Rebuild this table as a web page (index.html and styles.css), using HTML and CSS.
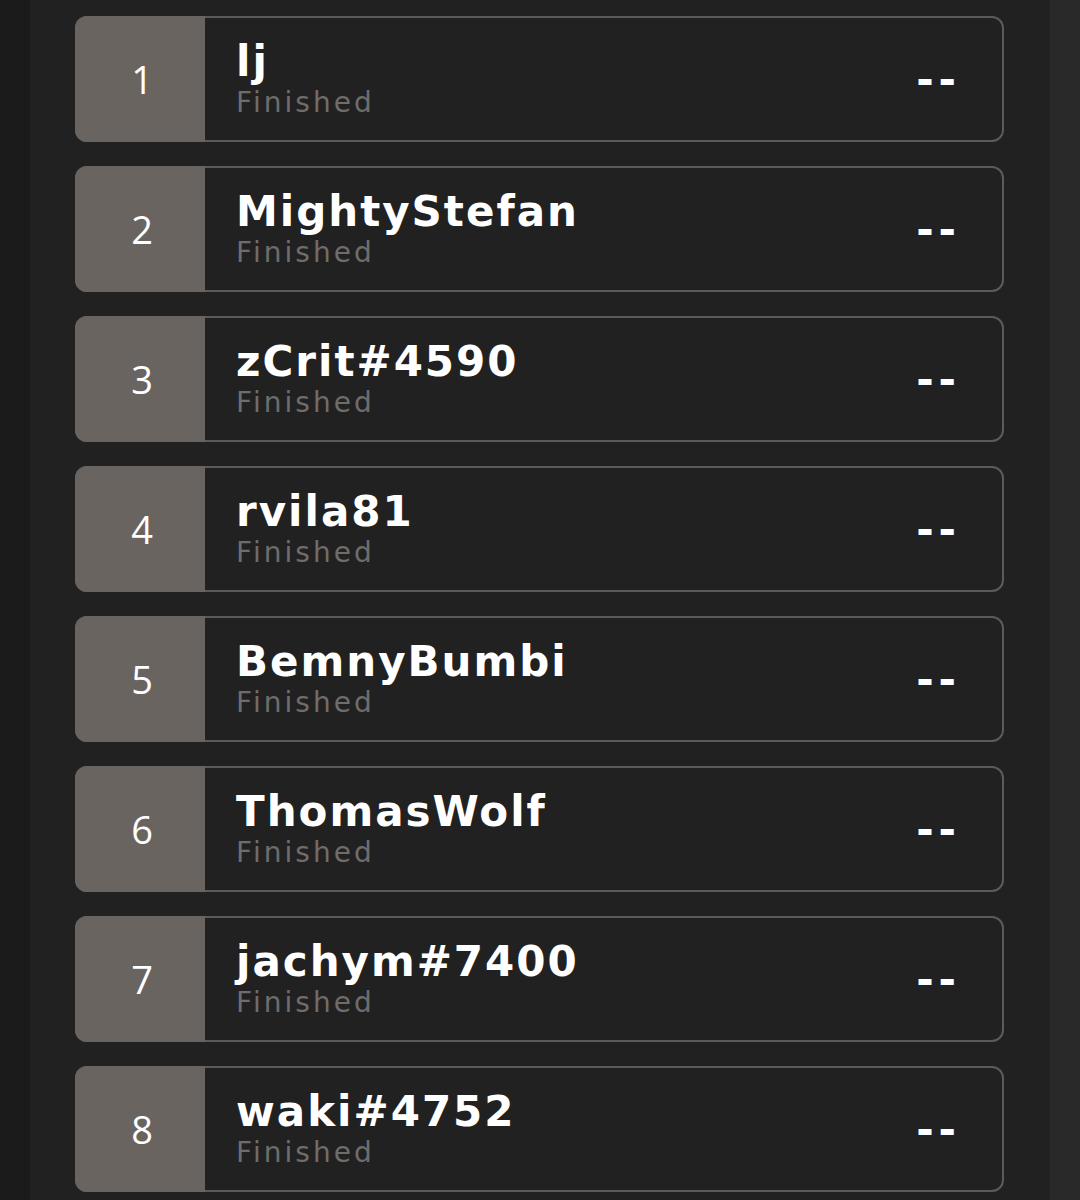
FILE: index.html
```html
<!DOCTYPE html>
<html>
<head>
<meta charset="utf-8">
<link rel="stylesheet" href="styles.css">
</head>
<body>
<div class="page">
  <div class="edge-left"></div>
  <main class="list">
    <div class="card"><div class="rank">1</div><div class="info"><div class="name">lj</div><div class="status">Finished</div></div><div class="score">--</div></div>
    <div class="card"><div class="rank">2</div><div class="info"><div class="name">MightyStefan</div><div class="status">Finished</div></div><div class="score">--</div></div>
    <div class="card"><div class="rank">3</div><div class="info"><div class="name">zCrit#4590</div><div class="status">Finished</div></div><div class="score">--</div></div>
    <div class="card"><div class="rank">4</div><div class="info"><div class="name">rvila81</div><div class="status">Finished</div></div><div class="score">--</div></div>
    <div class="card"><div class="rank">5</div><div class="info"><div class="name">BemnyBumbi</div><div class="status">Finished</div></div><div class="score">--</div></div>
    <div class="card"><div class="rank">6</div><div class="info"><div class="name">ThomasWolf</div><div class="status">Finished</div></div><div class="score">--</div></div>
    <div class="card"><div class="rank">7</div><div class="info"><div class="name">jachym#7400</div><div class="status">Finished</div></div><div class="score">--</div></div>
    <div class="card"><div class="rank">8</div><div class="info"><div class="name">waki#4752</div><div class="status">Finished</div></div><div class="score">--</div></div>
  </main>
  <div class="edge-right"></div>
</div>
</body>
</html>
```
FILE: styles.css
```css
html, body {
  margin: 0;
  padding: 0;
  background: #222121;
  height: 1200px;
  overflow: hidden;
}
.page {
  display: flex;
  height: 1200px;
  font-family: "DejaVu Sans", "Open Sans", sans-serif;
}
.edge-left {
  width: 30px;
  background: #1c1b1b;
}
.edge-right {
  width: 30px;
  background: #292929;
}
.list {
  flex: 1;
  background: #222121;
  padding: 16px 46px 0 45px;
  display: flex;
  flex-direction: column;
  gap: 24px;
}
.card {
  display: flex;
  align-items: center;
  height: 122px;
  border: 2px solid #5d5b5a;
  border-radius: 12px;
  background: #222121;
  flex-shrink: 0;
}
.rank {
  align-self: stretch;
  width: 130px;
  box-sizing: border-box;
  padding-left: 4px;
  margin: -2px 0 -2px -2px;
  background: #6a6461;
  border-radius: 12px 0 0 12px;
  display: flex;
  align-items: center;
  justify-content: center;
  color: #ffffff;
  font-size: 38px;
  font-family: "Open Sans", sans-serif;
}
.info {
  flex: 1;
  padding-left: 31px;
  display: flex;
  flex-direction: column;
  margin-top: 2px;
}
.name {
  color: #ffffff;
  font-weight: bold;
  font-size: 42px;
  line-height: 44px;
  letter-spacing: 2px;
}
.status {
  color: #6e6d6c;
  font-size: 28px;
  line-height: 34px;
  margin-top: 2px;
  letter-spacing: 3px;
}
.score {
  color: #ffffff;
  font-weight: bold;
  font-size: 42px;
  white-space: nowrap;
  margin-right: 41px;
  letter-spacing: 5px;
}
```
